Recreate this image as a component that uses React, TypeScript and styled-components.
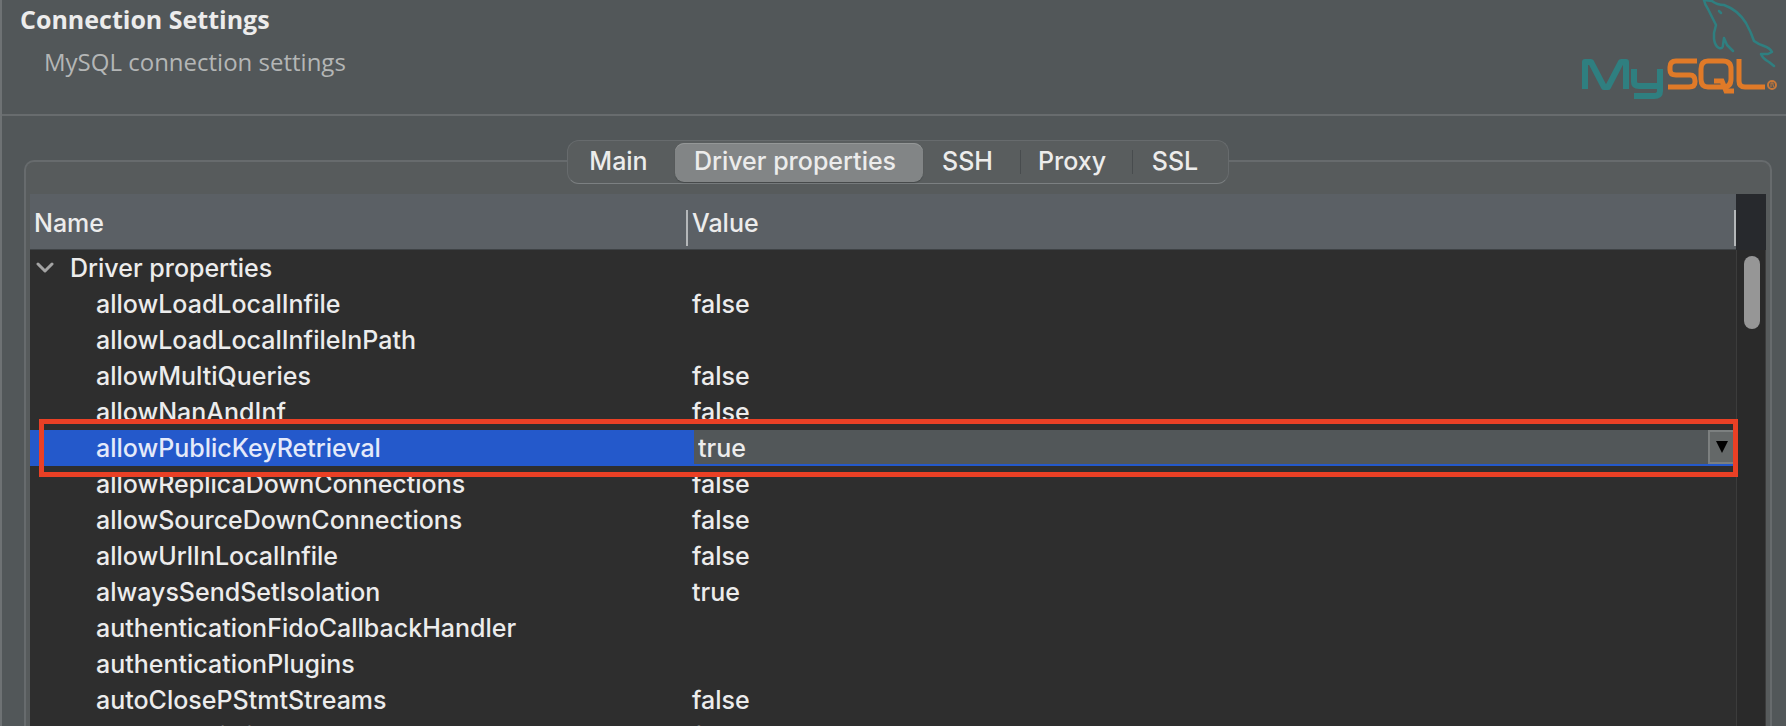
import React, { useState } from 'react';
import styled, { createGlobalStyle } from 'styled-components';

const UI_FONT = "Inter, 'Liberation Sans', sans-serif";
const TITLE_FONT = "'Open Sans', 'Noto Sans', sans-serif";

const GlobalStyle = createGlobalStyle`
  *, *::before, *::after { box-sizing: border-box; }
  body { margin: 0; background: #525759; }
`;

const Dialog = styled.div`
  height: 100vh;
  display: flex;
  flex-direction: column;
  overflow: hidden;
  border-left: 2px solid #6e7274;
  background: #525759;
  color: #ececec;
  font-family: ${UI_FONT};
  font-size: 25px;
  font-weight: 500;
  line-height: 36px;
`;

const Header = styled.header`
  flex: none;
  display: flex;
  justify-content: space-between;
  height: 116px;
  padding: 0 8px 0 18px;
  border-bottom: 2px solid #686c6e;
  font-family: ${TITLE_FONT};
`;

const Title = styled.h1`
  margin: 0;
  font-size: 25px;
  line-height: 38px;
  font-weight: 700;
`;

const Subtitle = styled.p`
  margin: 0;
  padding: 6px 0 0 24px;
  font-size: 24px;
  font-weight: 400;
  line-height: 36px;
  color: #b4b6b6;
`;

const Body = styled.main`
  flex: 1;
  min-height: 0;
  display: flex;
  flex-direction: column;
  padding: 24px 14px 0 22px;
`;

const TabList = styled.div`
  flex: none;
  align-self: center;
  position: relative;
  z-index: 1;
  display: flex;
  height: 44px;
  padding: 2px;
  margin-bottom: -24px;
  border: 1px solid #676b6d;
  border-bottom-color: #7c8082;
  border-radius: 12px;
  background: #595d5e;
`;

const Tab = styled.button<{ $width: number; $divided?: boolean }>`
  position: relative;
  width: ${(p) => p.$width}px;
  height: 39px;
  padding: 0 8px 3px 0;
  border: 0;
  border-radius: 9px;
  background: transparent;
  color: #ececec;
  font: inherit;
  text-align: center;
  white-space: nowrap;

  &[aria-selected='true'] {
    background: #828586;
    box-shadow: 0 1px 1px #45494a, inset 0 1px 0 #949797;
  }

  ${(p) =>
    p.$divided &&
    `&::before {
      content: '';
      position: absolute;
      left: 0;
      top: 7px;
      width: 1px;
      height: 24px;
      background: #484c4e;
    }`}
`;

const Panel = styled.section`
  flex: 1;
  min-height: 0;
  display: flex;
  padding: 32px 4px 0;
  border: 2px solid #676b6d;
  border-bottom: 0;
  border-radius: 10px 10px 0 0;
  background: #575b5c;
`;

const TableArea = styled.div`
  flex: 1;
  min-width: 0;
  background: #2e2e2e;
`;

const Table = styled.table`
  width: 100%;
  table-layout: fixed;
  border-collapse: collapse;
`;

const HeadCell = styled.th<{ $width?: string }>`
  width: ${(p) => p.$width ?? 'auto'};
  height: 56px;
  padding: 16px 0 0;
  background: #5b6065;
  box-shadow: inset 0 -1px 0 #3f4346;
  font-weight: inherit;
  text-align: left;
  vertical-align: top;
`;

const HeadLabel = styled.div`
  height: 36px;
  padding-left: 4px;
  line-height: 26px;
  border-right: 2px solid #b4b7b9;
`;

const Row = styled.tr<{ $selected?: boolean }>`
  position: relative;
  background: ${(p) => (p.$selected ? '#2459cb' : 'transparent')};
  color: ${(p) => (p.$selected ? '#e4eafa' : '#ececec')};
`;

const Cell = styled.td<{ $indent: number }>`
  height: 36px;
  padding: 0 0 0 ${(p) => p.$indent}px;
  white-space: nowrap;
`;

const GroupToggle = styled.button`
  display: flex;
  align-items: center;
  gap: 16px;
  height: 36px;
  padding: 0;
  border: 0;
  background: transparent;
  color: inherit;
  font: inherit;
`;

const Editor = styled.div`
  display: flex;
  height: 36px;
  border-bottom: 2px solid #2459cb;
  background: #525759;
`;

const ValueSelect = styled.select`
  flex: 1;
  appearance: none;
  padding: 0 0 0 4px;
  border: 0;
  background: transparent;
  color: #ececec;
  font: inherit;
`;

const Arrow = styled.span`
  display: flex;
  align-items: center;
  justify-content: center;
  width: 28px;
  border: 2px solid #7c8080;
  background: #646868;
  pointer-events: none;
`;

const Highlight = styled.div`
  position: absolute;
  inset: -11px -2px -11px 9px;
  border: 5px solid #ea4025;
  pointer-events: none;
  z-index: 2;
`;

const ScrollTrack = styled.div`
  flex: none;
  width: 30px;
  border-left: 1px solid #3c3c3c;
  border-right: 1px solid #3c3c3c;
  background: #2a2a2a;
`;

const ScrollCorner = styled.div`
  height: 56px;
  margin: 0 -1px;
  background: #27292d;
`;

const ScrollThumb = styled.div`
  width: 16px;
  height: 73px;
  margin: 6px 0 0 7px;
  border-radius: 8px;
  background: #969696;
`;

const MySqlLogo = () => (
  <svg width="198" height="100" viewBox="0 0 198 100" fill="none" role="img" aria-label="MySQL">
    <g stroke="#2f7f80" strokeWidth="6" strokeLinejoin="round">
      <path d="M5 89V62h6l13 25h4l13-25h5v27" />
      <path d="M54 69v13q0 4 5 4h21M80 69v22q0 5-6 5H54" />
    </g>
    <g stroke="#e07a28" strokeWidth="5">
      <path d="M117 61H96q-6 0-6 6v3q0 5 6 5h14q5 0 5 6v1q0 5-6 5H88" />
      <path d="M128 61h15q8 0 8 8v10q0 8-8 8h-15q-7 0-7-8V69q0-8 7-8ZM134 81h8l4 10h8" />
      <path d="M159 59v22q0 6 6 6h20" />
    </g>
    <g stroke="#c87838" strokeWidth="2">
      <circle cx="192" cy="85" r="4" />
      <path d="M191 87v-4h2v2l1 2" strokeWidth="1" />
    </g>
    <g stroke="#2f7f80" strokeWidth="2.5" strokeLinejoin="round" strokeLinecap="round">
      <path d="M124 0q1 5 4 9l8 16-2 8v6q1 7 5 9 4 1 4-3l1-7 3 7 6 6" />
      <path d="M124 0l8 1q5 4 12 4 14 5 22 18 5 9 8 18q4 3 10 5 6 2 8 6l-4 2h-7q2 5 8 8l5 4" />
      <path d="M139 11l2 2" />
    </g>
  </svg>
);

const Chevron = () => (
  <svg width="18" height="18" viewBox="0 0 18 18" fill="none" aria-hidden="true">
    <path d="M2 5l7 7 7-7" stroke="#a4a4a4" strokeWidth="3" strokeLinecap="round" strokeLinejoin="round" />
  </svg>
);

const TABS = [
  { label: 'Main', width: 105 },
  { label: 'Driver properties', width: 248 },
  { label: 'SSH', width: 97 },
  { label: 'Proxy', width: 112, divided: true },
  { label: 'SSL', width: 94, divided: true },
];

const PROPERTIES: [string, string][] = [
  ['allowLoadLocalInfile', 'false'],
  ['allowLoadLocalInfileInPath', ''],
  ['allowMultiQueries', 'false'],
  ['allowNanAndInf', 'false'],
  ['allowPublicKeyRetrieval', 'true'],
  ['allowReplicaDownConnections', 'false'],
  ['allowSourceDownConnections', 'false'],
  ['allowUrlInLocalInfile', 'false'],
  ['alwaysSendSetIsolation', 'true'],
  ['authenticationFidoCallbackHandler', ''],
  ['authenticationPlugins', ''],
  ['autoClosePStmtStreams', 'false'],
  ['autoDeserialize', 'false'],
];

export default function App() {
  const [tab, setTab] = useState('Driver properties');
  const [retrieval, setRetrieval] = useState('true');

  return (
    <Dialog>
      <GlobalStyle />
      <Header>
        <div>
          <Title>Connection Settings</Title>
          <Subtitle>MySQL connection settings</Subtitle>
        </div>
        <MySqlLogo />
      </Header>
      <Body>
        <TabList role="tablist">
          {TABS.map((t) => (
            <Tab
              key={t.label}
              role="tab"
              aria-selected={tab === t.label}
              $width={t.width}
              $divided={t.divided}
              onClick={() => setTab(t.label)}
            >
              {t.label}
            </Tab>
          ))}
        </TabList>
        <Panel>
          <TableArea>
            <Table>
              <thead>
                <tr>
                  <HeadCell $width="658px"><HeadLabel>Name</HeadLabel></HeadCell>
                  <HeadCell><HeadLabel>Value</HeadLabel></HeadCell>
                </tr>
              </thead>
              <tbody>
                <Row>
                  <Cell $indent={6} colSpan={2}>
                    <GroupToggle aria-expanded="true"><Chevron />Driver properties</GroupToggle>
                  </Cell>
                </Row>
                {PROPERTIES.map(([name, value]) =>
                  name === 'allowPublicKeyRetrieval' ? (
                    <Row key={name} $selected>
                      <Cell $indent={66}><label htmlFor={name}>{name}</label></Cell>
                      <Cell $indent={6}>
                        <Editor>
                          <ValueSelect id={name} value={retrieval} onChange={(e) => setRetrieval(e.target.value)}>
                            <option>true</option>
                            <option>false</option>
                          </ValueSelect>
                          <Arrow>
                            <svg width="12" height="12" viewBox="0 0 12 12" aria-hidden="true"><path d="M0 0h12L6 12Z" fill="#000" /></svg>
                          </Arrow>
                        </Editor>
                        <Highlight />
                      </Cell>
                    </Row>
                  ) : (
                    <Row key={name}>
                      <Cell $indent={66}>{name}</Cell>
                      <Cell $indent={4}>{value}</Cell>
                    </Row>
                  ),
                )}
              </tbody>
            </Table>
          </TableArea>
          <ScrollTrack>
            <ScrollCorner />
            <ScrollThumb />
          </ScrollTrack>
        </Panel>
      </Body>
    </Dialog>
  );
}
